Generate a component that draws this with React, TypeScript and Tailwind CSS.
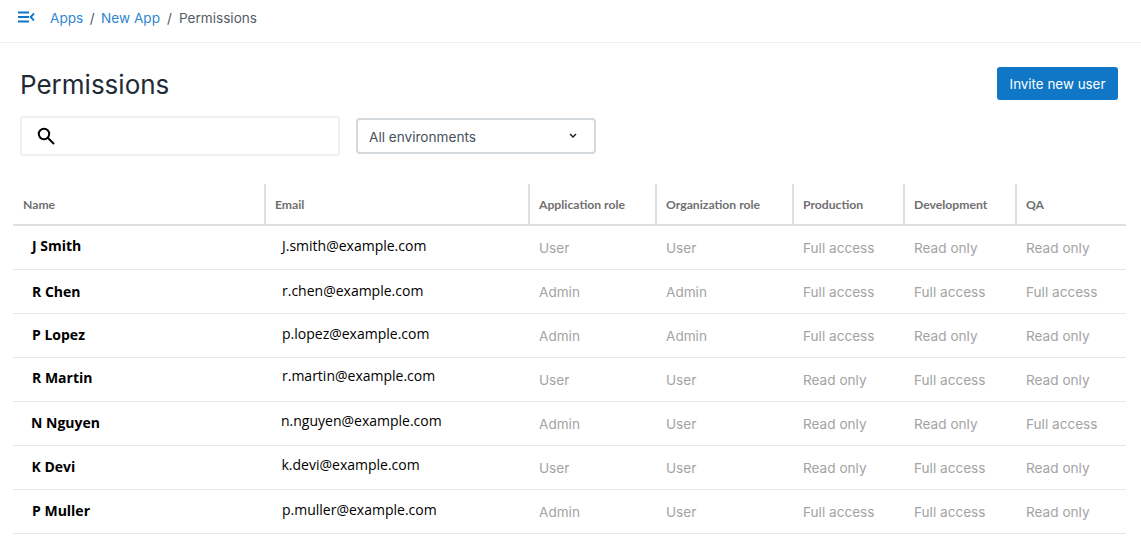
const rows = [
  { name: "J Smith", nameCls: "pl-[19px] pb-[4px]", email: "J.smith@example.com", emailCls: "pl-[18px] pb-[4px]", c: ["User", "User", "Full access", "Read only", "Read only"] },
  { name: "R Chen", nameCls: "pl-[19px]", email: "r.chen@example.com", emailCls: "pl-[18px] pb-[2px]", c: ["Admin", "Admin", "Full access", "Full access", "Full access"] },
  { name: "P Lopez", nameCls: "pl-[19px] pb-[2px]", email: "p.lopez@example.com", emailCls: "pl-[18px] pb-[4px]", c: ["Admin", "Admin", "Full access", "Read only", "Read only"] },
  { name: "R Martin", nameCls: "pl-[19px] pb-[4px]", email: "r.martin@example.com", emailCls: "pl-[18px] pb-[8px]", c: ["User", "User", "Read only", "Full access", "Read only"] },
  { name: "N Nguyen", nameCls: "pl-[18px] pb-[2px]", email: "n.nguyen@example.com", emailCls: "pl-[17px] pb-[6px]", c: ["Admin", "User", "Read only", "Read only", "Full access"] },
  { name: "K Devi", nameCls: "pl-[18.5px] pb-[2px]", email: "k.devi@example.com", emailCls: "pl-[17.5px] pb-[6px]", c: ["User", "User", "Read only", "Full access", "Read only"] },
  { name: "P Muller", nameCls: "pl-[19px] pb-[2px]", email: "p.muller@example.com", emailCls: "pl-[18px] pb-[4px]", c: ["Admin", "User", "Full access", "Full access", "Read only"] },
];
const heads = ["Name", "Email", "Application role", "Organization role", "Production", "Development", "QA"];
const cols = "grid grid-cols-[251px_264px_127px_137px_111px_112px_111px]";

export default function App() {
  return (
    <div className="w-[1141px] h-[548px] overflow-hidden bg-white font-['Inter',sans-serif]">
      <div className="h-[43px] border-b border-[#eceef0] flex items-start pt-[8px] pl-[18px] ml-px">
        <svg width="17" height="12" viewBox="0 0 17 12" fill="none" stroke="#0f77c6" strokeWidth="1.8" className="mr-[15px] -ml-px mt-[3px]">
          <path d="M0 1.5h11M0 6h11M0 10.5h11" />
          <path d="M16 2.5 12.6 6 16 9.5" />
        </svg>
        <div className="flex text-[13.6px] leading-[20px]">
          <span className="text-[#2f86cf]">Apps</span>
          <span className="text-[#4a5560] mx-[6.5px]">/</span>
          <span className="text-[#2f86cf]">New App</span>
          <span className="text-[#4a5560] mx-[7px]">/</span>
          <span className="text-[#515b65]">Permissions</span>
        </div>
      </div>
      <div className="flex items-start justify-between pl-[20px] pr-[23px] pt-[24px]">
        <h1 className="text-[26px] leading-[36px] text-[#212b36] font-normal">Permissions</h1>
        <button className="h-[33px] w-[121px] pt-px rounded-[3px] bg-[#0f77c6] text-white text-[13.4px]">Invite new user</button>
      </div>
      <div className="flex items-center pl-[20px] mt-[13px]">
        <div className="w-[320px] h-[40px] border-2 border-[#eef1f3] rounded-[3px] flex items-center pl-[14px]">
          <svg width="20" height="20" viewBox="0 0 20 20" fill="none" stroke="#000" strokeWidth="2">
            <circle cx="8" cy="8" r="5.2" />
            <path d="m12 12 6 6" />
          </svg>
        </div>
        <div className="ml-[16px] w-[240px] h-[36px] border-2 border-[#d3d9dd] rounded-[4px] flex items-center justify-between pl-[11px] pr-[17px] text-[13.6px] text-[#454f5b]">
          <span className="pt-[2px]">All environments</span>
          <svg width="8" height="6" viewBox="0 0 8 6" fill="none" stroke="#222" strokeWidth="1.5"><path d="m1 1 3 3 3-3" /></svg>
        </div>
      </div>
      <div className="ml-[13px] w-[1113px] mt-[28px]">
        <div className={`${cols} h-[42px] border-b-2 border-[#dfdfdf] font-['Lato',sans-serif] font-bold text-[12.2px] text-[#6f6f6f]`}>
          {heads.map((h, i) => (
            <div key={h} className={`flex items-center pt-[2px] pl-[9px] ${i > 0 ? "border-l-2 border-[#dfdfdf]" : "pl-[10px]"}`}>{h}</div>
          ))}
        </div>
        {rows.map((r) => (
          <div key={r.name} className={`${cols} h-[44px] border-b border-[#e6e6e6] items-center`}>
            <div className={`text-[14px] font-bold text-black font-['Open_Sans',sans-serif] ${r.nameCls}`}>{r.name}</div>
            <div className={`text-[14px] text-black font-['Open_Sans',sans-serif] ${r.emailCls}`}>{r.email}</div>
            {r.c.map((v, i) => (
              <div key={i} className="pl-[11px] pt-[1px] text-[13.6px] text-[#a3a3a3] font-['Inter',sans-serif]">{v}</div>
            ))}
          </div>
        ))}
      </div>
    </div>
  );
}
